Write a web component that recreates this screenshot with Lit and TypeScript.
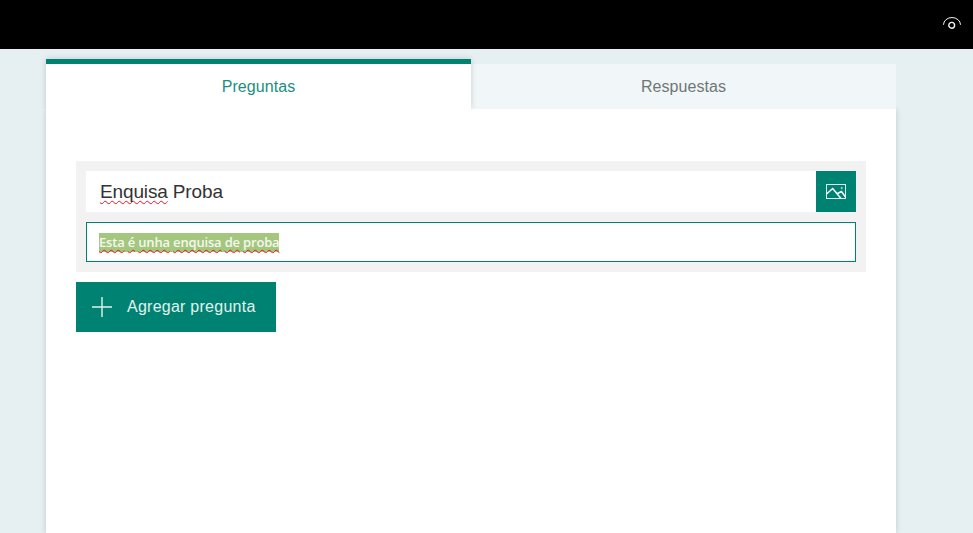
import { LitElement, html, css } from "lit";
import { customElement } from "lit/decorators.js";

@customElement("app-root")
export class AppRoot extends LitElement {
  static styles = css`
    :host { display: block; height: 533px; overflow: hidden; background: #e6eff2; font-family: "Liberation Sans", Arial, sans-serif; }
    .top { height: 49px; background: #000; display: flex; justify-content: flex-end; align-items: flex-start; padding-right: 11px; box-sizing: border-box; }
    .top svg { margin-top: 16px; display: block; }
    .page { width: 850px; margin: 10px 0 0 46px; }
    .tabs { display: flex; height: 50px; }
    .tab { flex: 1; display: flex; align-items: center; justify-content: center; font-size: 16px; box-sizing: border-box; letter-spacing: .07px; }
    .tab.on { color: #1a8f80; background: #fff; border-top: 5px solid #008272; position: relative; z-index: 1; box-shadow: 0 0 6px rgba(0,0,0,.16); clip-path: inset(-8px -8px 0 -8px); }
    .tab.off { color: #6f7676; background: #f1f7f8; margin-top: 5px; }
    .body { background: #fff; height: 424px; padding: 52px 30px 0; box-sizing: border-box; box-shadow: 0 0 6px rgba(0,0,0,.16); }
    .box { background: #f2f2f2; padding: 10px; display: flex; flex-direction: column; gap: 10px; }
    .row { display: flex; height: 41px; }
    .title { flex: 1; background: #fff; display: flex; align-items: center; padding-left: 14px; font-size: 19px; color: #333; letter-spacing: -.14px; }
    .wavy { text-decoration: underline wavy #e81123 1px; text-underline-offset: 2px; text-decoration-skip-ink: none; }
    .img { width: 40px; background: #008272; display: flex; align-items: center; justify-content: center; }
    .desc { height: 40px; box-sizing: border-box; border: 1px solid #008272; background: #fff; display: flex; align-items: center; padding-left: 12px; }
    .sel { background: #a4c67f; color: #f4f8ee; font-family: "Open Sans", sans-serif; font-weight: 600; font-size: 13px; line-height: 19px; letter-spacing: -.18px; }
    .add { margin-top: 10px; width: 200px; height: 50px; background: #008272; color: #e0f2ee; display: flex; align-items: center; padding-left: 16px; gap: 15px; box-sizing: border-box; font-size: 16px; letter-spacing: .25px; }
    svg { flex: none; }
  `;
  render() {
    return html`
      <div class="top">
        <svg width="20" height="16" viewBox="0 0 20 16" fill="none" stroke="#f2f2f2" stroke-width="1">
          <path d="M1.5 8.8A8.2 7 0 0 1 18.5 8.8" />
          <circle cx="9.7" cy="9.3" r="2.9" stroke-width="1.4" />
        </svg>
      </div>
      <div class="page">
        <div class="tabs">
          <div class="tab on">Preguntas</div>
          <div class="tab off">Respuestas</div>
        </div>
        <div class="body">
          <div class="box">
            <div class="row">
              <div class="title"><span><span class="wavy">Enquisa</span> Proba</span></div>
              <div class="img">
                <svg width="20" height="15" viewBox="0 0 20 15" fill="none" stroke="#d9efea" stroke-width="1">
                  <rect x="0.5" y="0.5" width="19" height="14" />
                  <path stroke="#fff" stroke-width="1.4" d="M0.5 10 6.7 4.5 15 14.5M11.5 9.5 15.5 7.5 19.5 13" />
                  <circle cx="15.7" cy="4" r=".6" />
                </svg>
              </div>
            </div>
            <div class="desc"><span class="sel"><span class="wavy">Esta</span> <span class="wavy">é</span> <span class="wavy">unha</span> <span class="wavy">enquisa</span> <span class="wavy">de</span> <span class="wavy">proba</span></span></div>
          </div>
          <div class="add">
            <svg width="20" height="20" viewBox="0 0 20 20" stroke="#e0f2ee" stroke-width="1.4"><path d="M0 10h20M10 0v20" /></svg>
            <span>Agregar pregunta</span>
          </div>
        </div>
      </div>
    `;
  }
}
